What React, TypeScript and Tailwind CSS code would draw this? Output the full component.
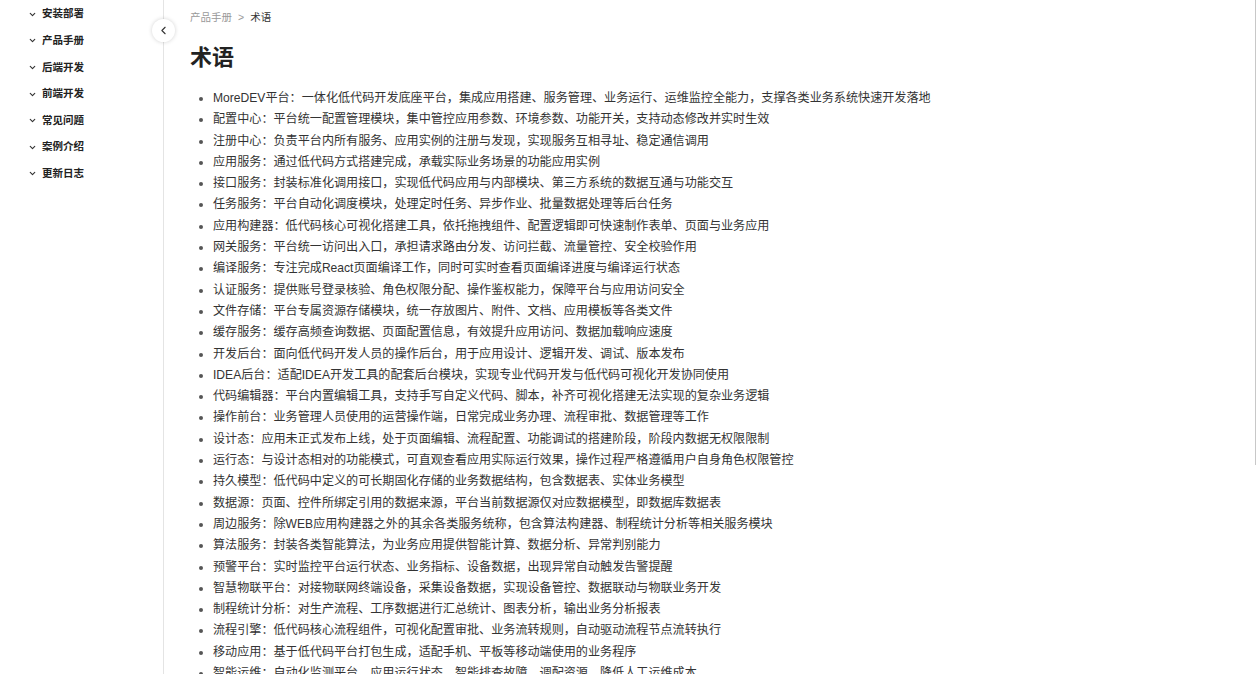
import { ChevronDown, ChevronLeft } from "lucide-react";

const navItems = ["安装部署", "产品手册", "后端开发", "前端开发", "常见问题", "案例介绍", "更新日志"];

const terms: [string, string][] = [
  ["MoreDEV平台", "一体化低代码开发底座平台，集成应用搭建、服务管理、业务运行、运维监控全能力，支撑各类业务系统快速开发落地"],
  ["配置中心", "平台统一配置管理模块，集中管控应用参数、环境参数、功能开关，支持动态修改并实时生效"],
  ["注册中心", "负责平台内所有服务、应用实例的注册与发现，实现服务互相寻址、稳定通信调用"],
  ["应用服务", "通过低代码方式搭建完成，承载实际业务场景的功能应用实例"],
  ["接口服务", "封装标准化调用接口，实现低代码应用与内部模块、第三方系统的数据互通与功能交互"],
  ["任务服务", "平台自动化调度模块，处理定时任务、异步作业、批量数据处理等后台任务"],
  ["应用构建器", "低代码核心可视化搭建工具，依托拖拽组件、配置逻辑即可快速制作表单、页面与业务应用"],
  ["网关服务", "平台统一访问出入口，承担请求路由分发、访问拦截、流量管控、安全校验作用"],
  ["编译服务", "专注完成React页面编译工作，同时可实时查看页面编译进度与编译运行状态"],
  ["认证服务", "提供账号登录核验、角色权限分配、操作鉴权能力，保障平台与应用访问安全"],
  ["文件存储", "平台专属资源存储模块，统一存放图片、附件、文档、应用模板等各类文件"],
  ["缓存服务", "缓存高频查询数据、页面配置信息，有效提升应用访问、数据加载响应速度"],
  ["开发后台", "面向低代码开发人员的操作后台，用于应用设计、逻辑开发、调试、版本发布"],
  ["IDEA后台", "适配IDEA开发工具的配套后台模块，实现专业代码开发与低代码可视化开发协同使用"],
  ["代码编辑器", "平台内置编辑工具，支持手写自定义代码、脚本，补齐可视化搭建无法实现的复杂业务逻辑"],
  ["操作前台", "业务管理人员使用的运营操作端，日常完成业务办理、流程审批、数据管理等工作"],
  ["设计态", "应用未正式发布上线，处于页面编辑、流程配置、功能调试的搭建阶段，阶段内数据无权限限制"],
  ["运行态", "与设计态相对的功能模式，可直观查看应用实际运行效果，操作过程严格遵循用户自身角色权限管控"],
  ["持久模型", "低代码中定义的可长期固化存储的业务数据结构，包含数据表、实体业务模型"],
  ["数据源", "页面、控件所绑定引用的数据来源，平台当前数据源仅对应数据模型，即数据库数据表"],
  ["周边服务", "除WEB应用构建器之外的其余各类服务统称，包含算法构建器、制程统计分析等相关服务模块"],
  ["算法服务", "封装各类智能算法，为业务应用提供智能计算、数据分析、异常判别能力"],
  ["预警平台", "实时监控平台运行状态、业务指标、设备数据，出现异常自动触发告警提醒"],
  ["智慧物联平台", "对接物联网终端设备，采集设备数据，实现设备管控、数据联动与物联业务开发"],
  ["制程统计分析", "对生产流程、工序数据进行汇总统计、图表分析，输出业务分析报表"],
  ["流程引擎", "低代码核心流程组件，可视化配置审批、业务流转规则，自动驱动流程节点流转执行"],
  ["移动应用", "基于低代码平台打包生成，适配手机、平板等移动端使用的业务程序"],
  ["智能运维", "自动化监测平台、应用运行状态，智能排查故障，调配资源，降低人工运维成本"],
];

const font = "font-['Helvetica','Liberation_Sans','Noto_Sans_CJK_SC',sans-serif]";

export default function App() {
  return (
    <div className={`relative flex h-[674px] w-full overflow-hidden bg-white text-[#333] ${font}`}>
      {/* sidebar */}
      <aside className="relative w-[164px] shrink-0 border-r border-[#e4e4e4]">
        <nav className="flex flex-col pt-[1px]">
          {navItems.map((item) => (
            <div key={item} className="flex h-[26.6px] items-center pl-[28px]">
              <ChevronDown className="h-[9px] w-[9px] text-[#333]" strokeWidth={3} />
              <span className="ml-[5px] text-[10.5px] font-bold text-[#222]">{item}</span>
            </div>
          ))}
        </nav>
        <button
          type="button"
          className="absolute right-[-12px] top-[19px] flex h-[23px] w-[23px] items-center justify-center rounded-full bg-white shadow-[0_0_4px_rgba(0,0,0,0.18)]"
        >
          <ChevronLeft className="h-[13px] w-[13px] text-[#333]" strokeWidth={2} />
        </button>
      </aside>

      {/* content */}
      <main className="min-w-0 flex-1 pl-[26px] pt-[10px]">
        <div className="flex items-center text-[10.5px] leading-[14px]">
          <span className="text-[#999]">产品手册</span>
          <span className="mx-[6px] text-[#999]">&gt;</span>
          <span className="text-[#333]">术语</span>
        </div>
        <h1 className="mt-[20px] text-[22px] font-bold leading-[28px] text-[#222]">术语</h1>
        <ul className="mt-[16px] list-disc pl-[23px] text-[12.1px] leading-[21.3px] marker:text-[#555]">
          {terms.map(([k, v]) => (
            <li key={k}>
              {k}：{v}
            </li>
          ))}
        </ul>
      </main>

      <div className="absolute right-0 top-0 h-[465px] w-px bg-[#c8c8c8]" />
    </div>
  );
}
